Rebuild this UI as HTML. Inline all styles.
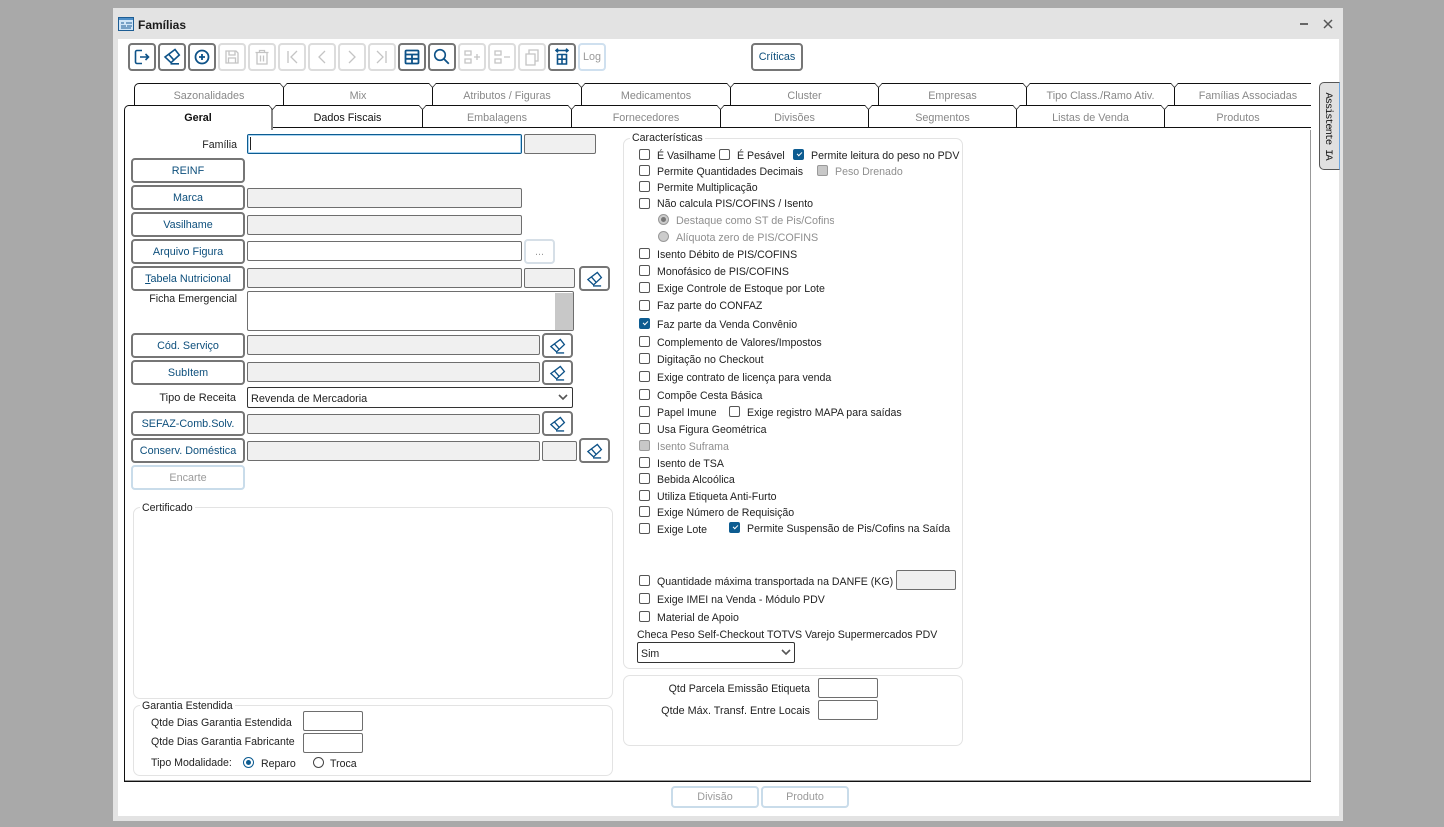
<!DOCTYPE html>
<html><head><meta charset="utf-8"><title>Famílias</title>
<style>
html,body{margin:0;padding:0;width:1444px;height:827px;overflow:hidden;background:#a9a9a9;font:10.6px "Liberation Sans",sans-serif;color:#222}
div,span,svg{position:absolute;box-sizing:border-box}
#win{left:113px;top:8px;width:1230px;height:813px;background:#e3e3e3}
#client{left:118px;top:39px;width:1221px;height:777px;background:#fff}
.l{white-space:nowrap;line-height:14px;height:14px;font-size:10.6px;margin-top:1px}
.r{text-align:right}
.dis{color:#8f8f8f}
.b{border:2px solid #767676;border-radius:4px;background:#fff;text-align:center;color:#0d4f7c;font-size:10.8px;line-height:23px;white-space:nowrap}
.bd{border:2px solid #d6dfe7;border-radius:4px;background:#fff;text-align:center;color:#9a9a9a;font-size:10.8px;line-height:23px;white-space:nowrap}
.t{width:28px;height:28px;top:43px;border:2px solid #767676;border-radius:4px;background:#fff}
.td{width:28px;height:28px;top:43px;border:2px solid #dcdcdc;border-radius:4px;background:#fff}
.t svg,.td svg{left:3px;top:3px;width:18px;height:18px;fill:none;stroke:#0d5288;stroke-width:1.6}
.td svg{stroke:#c4c4c4;stroke-width:1.3}
.i{border:1px solid #6e6e6e;border-radius:2px;background:#f0f0f0;height:20px}
.w{background:#fff}
.tab{height:23px;background:#fff;border:solid #111;border-width:1px 0 1px 1px;text-align:center;line-height:24px;font-size:10.8px;color:#888;white-space:nowrap}
.fs{border:1px solid #e3e3e3;border-radius:7px;background:#fff}
.lg{background:#fff;padding:0 2px;line-height:13px;height:13px;font-size:10.6px;white-space:nowrap;color:#222;margin-top:1px}
.c{width:11px;height:11px;left:639px;border:1px solid #555;border-radius:2px;background:#fff}
.cd{background:#c8c8c8;border-color:#999}
.ck{background:#0d5c91;border-color:#0d5c91}
.ck:after{content:"";position:absolute;left:3px;top:2px;width:4px;height:2px;border:solid #fff;border-width:0 0 1.2px 1.2px;transform:rotate(-45deg)}
.er{width:31px;height:25px;border:2px solid #767676;border-radius:4px;background:#fff}
.er svg{left:5px;top:3px;width:17px;height:17px;fill:none;stroke:#0d5288;stroke-width:1.4}
.rad{width:11px;height:11px;border-radius:50%;border:1px solid #444;background:#fff}
</style></head>
<body>
<svg width="0" height="0" style="left:0;top:0"><defs><symbol id="er" viewBox="0 0 18 18"><path d="M2 9 12 1.500 16.300 7 8 14.700z"/><path d="M5.500 6 11 12.200M7.500 15.800H16"/></symbol></defs></svg>
<div id="win"></div>
<div id="client"></div>

<!-- title -->
<svg style="left:118px;top:17px" width="16" height="14" viewBox="0 0 16 14"><rect x=".5" y=".5" width="15" height="13" fill="#cfe4f7" stroke="#1d5d94"/><rect x="1" y="1" width="14" height="2" fill="#4d8ec7"/><path d="M3 6h3M8 6h6M3 9h5M9 9h5M3 11h10" stroke="#1d5d94" fill="none"/></svg>
<div class="l" style="left:138px;top:17px;font-weight:bold;font-size:12px;color:#1a1a1a">Famílias</div>
<div style="left:1300px;top:23px;width:8px;height:2px;background:#666"></div>
<svg style="left:1323px;top:19px" width="10" height="10" viewBox="0 0 10 10"><path d="M1 1l8 8M9 1l-8 8" stroke="#555" stroke-width="1.500" fill="none"/></svg>

<!-- toolbar -->
<div class="t" style="left:128px"><svg viewBox="0 0 18 18"><path d="M9 2.500H4A1.500 1.500 0 0 0 2.500 4v10A1.500 1.500 0 0 0 4 15.500h5M7 9h8.500M12.500 6l3 3-3 3"/></svg></div>
<div class="t" style="left:158px"><svg viewBox="0 0 18 18"><use href="#er"/></svg></div>
<div class="t" style="left:188px"><svg viewBox="0 0 18 18"><circle cx="9" cy="9" r="6.500" stroke-width="1.800"/><path d="M9 6v6M6 9h6" stroke-width="1.800"/></svg></div>
<div class="td" style="left:218px"><svg viewBox="0 0 18 18"><path d="M3 3h10l2 2v10H3zM6 3v4h6V3M5.500 15v-5h7v5"/></svg></div>
<div class="td" style="left:248px"><svg viewBox="0 0 18 18"><path d="M2.500 4.500h13M6.500 4.500V2.500h5v2M4 4.500V16h10V4.500M7.500 7.500v6M10.500 7.500v6"/></svg></div>
<div class="td" style="left:278px"><svg viewBox="0 0 18 18"><path d="M5 3v12M14 3 8 9l6 6"/></svg></div>
<div class="td" style="left:308px"><svg viewBox="0 0 18 18"><path d="M12 3 6 9l6 6"/></svg></div>
<div class="td" style="left:338px"><svg viewBox="0 0 18 18"><path d="m6 3 6 6-6 6"/></svg></div>
<div class="td" style="left:368px"><svg viewBox="0 0 18 18"><path d="M13 3v12M4 3l6 6-6 6"/></svg></div>
<div class="t" style="left:398px"><svg viewBox="0 0 18 18"><path d="M3.500 2.500h11a1 1 0 0 1 1 1v11a1 1 0 0 1-1 1h-11a1 1 0 0 1-1-1v-11a1 1 0 0 1 1-1zM2.500 6.500h13M2.500 10.800h13M9 6.500v9" stroke-width="1.800"/></svg></div>
<div class="t" style="left:428px"><svg viewBox="0 0 18 18"><circle cx="7" cy="7" r="5.300"/><path d="m11 11 4.800 4.800" stroke-width="1.800"/></svg></div>
<div class="td" style="left:458px"><svg viewBox="0 0 18 18"><path d="M2 3h6v4H2zM2 11h6v4H2zM11 9h6M14 6v6"/></svg></div>
<div class="td" style="left:488px"><svg viewBox="0 0 18 18"><path d="M2 3h6v4H2zM2 11h6v4H2zM11 9h6"/></svg></div>
<div class="td" style="left:518px"><svg viewBox="0 0 18 18"><path d="M3 6h9v11H3zM6 6V2h9v11h-3"/></svg></div>
<div class="t" style="left:548px"><svg viewBox="0 0 18 18"><path d="M3 2.500h12M5 .7 3 2.500 5 4.300M13 .7l2 1.800L13 4.300M4.500 6.500h9v9.500h-9zM4.500 11.200h9M9 6.500V16"/></svg></div>
<div class="bd" style="left:578px;top:43px;width:28px;height:28px;line-height:25px;border-color:#cfe0ef">Log</div>
<div class="b" style="left:751px;top:43px;width:52px;height:28px;line-height:25px">Críticas</div>

<!-- tabs row 1 -->
<div class="tab" style="left:134px;top:83px;width:149px;border-top-left-radius:5px">Sazonalidades</div>
<div class="tab" style="left:283px;top:83px;width:149px">Mix</div>
<div class="tab" style="left:432px;top:83px;width:149px">Atributos / Figuras</div>
<div class="tab" style="left:581px;top:83px;width:149px">Medicamentos</div>
<div class="tab" style="left:730px;top:83px;width:148px">Cluster</div>
<div class="tab" style="left:878px;top:83px;width:148px">Empresas</div>
<div class="tab" style="left:1026px;top:83px;width:148px">Tipo Class./Ramo Ativ.</div>
<div class="tab" style="left:1174px;top:83px;width:137px;padding-left:10px;padding-right:0">Famílias Associadas</div>

<!-- panel -->
<div style="left:124px;top:127px;width:1187px;height:655px;border-left:1px solid #111;border-bottom:1px solid #111;background:#fff"></div>
<div style="left:125px;top:780px;width:1186px;height:1px;background:#999"></div>
<div style="left:1310px;top:130px;width:1px;height:650px;background:#999"></div>

<!-- tabs row 2 -->
<div class="tab" style="left:272px;top:105px;width:150px;color:#111">Dados Fiscais</div>
<div class="tab" style="left:422px;top:105px;width:149px">Embalagens</div>
<div class="tab" style="left:571px;top:105px;width:149px">Fornecedores</div>
<div class="tab" style="left:720px;top:105px;width:148px">Divisões</div>
<div class="tab" style="left:868px;top:105px;width:148px">Segmentos</div>
<div class="tab" style="left:1016px;top:105px;width:148px">Listas de Venda</div>
<div class="tab" style="left:1164px;top:105px;width:147px">Produtos</div>
<div class="tab" style="left:124px;top:105px;width:149px;height:25px;border-width:1px 2px 0 1px;border-color:#111 #888 #fff #111;border-top-left-radius:5px;color:#111;font-weight:bold">Geral</div>
<!-- tab notches -->
<svg style="left:0;top:0" width="1444" height="130" viewBox="0 0 1444 130"><path d="M280 83h7l-3.500 4zM429 83h7l-3.500 4zM578 83h7l-3.500 4zM727 83h7l-3.500 4zM875 83h7l-3.500 4zM1023 83h7l-3.500 4zM1171 83h7l-3.500 4zM269 105h7l-3.500 4zM419 105h7l-3.500 4zM568 105h7l-3.500 4zM717 105h7l-3.500 4zM865 105h7l-3.500 4zM1013 105h7l-3.500 4zM1161 105h7l-3.500 4z" fill="#fff"/><path d="M280 83.500l3.500 4 3.500-4M429 83.500l3.500 4 3.500-4M578 83.500l3.500 4 3.500-4M727 83.500l3.500 4 3.500-4M875 83.500l3.500 4 3.500-4M1023 83.500l3.500 4 3.500-4M1171 83.500l3.500 4 3.500-4M269 105.500l3.500 4 3.500-4M419 105.500l3.500 4 3.500-4M568 105.500l3.500 4 3.500-4M717 105.500l3.500 4 3.500-4M865 105.500l3.500 4 3.500-4M1013 105.500l3.500 4 3.500-4M1161 105.500l3.500 4 3.500-4" fill="none" stroke="#333" stroke-width=".8"/></svg>

<!-- assistant -->
<div style="left:1319px;top:82px;width:21px;height:88px;background:#e0e0e0;border:1px solid #555;border-right:1px solid #6ea7e0;border-radius:5px 0 0 5px"></div>
<div class="l" style="left:1286px;top:119px;width:84px;text-align:center;transform:rotate(90deg);font-family:'Liberation Mono',monospace;font-size:10.500px;color:#111;letter-spacing:-1.150px;margin-top:0">Assistente IA</div>

<!-- left column -->
<div class="l r" style="left:140px;top:137px;width:97px">Família</div>
<div class="i w" style="left:247px;top:134px;width:275px;border:1px solid #0d5c91;box-shadow:inset 0 0 0 1px #a8d4f2"></div>
<div style="left:250px;top:137px;width:1px;height:13px;background:#222"></div>
<div class="i" style="left:524px;top:134px;width:72px"></div>

<div class="b" style="left:131px;top:158px;width:114px;height:25px">REINF</div>
<div class="b" style="left:131px;top:185px;width:114px;height:25px">Marca</div>
<div class="i" style="left:247px;top:188px;width:275px"></div>
<div class="b" style="left:131px;top:212px;width:114px;height:25px">Vasilhame</div>
<div class="i" style="left:247px;top:215px;width:275px"></div>
<div class="b" style="left:131px;top:239px;width:114px;height:25px">Arquivo Figura</div>
<div class="i w" style="left:247px;top:241px;width:275px"></div>
<div class="bd" style="left:524px;top:239px;width:31px;height:25px">...</div>
<div class="b" style="left:131px;top:266px;width:114px;height:25px"><u>T</u>abela Nutricional</div>
<div class="i" style="left:247px;top:268px;width:275px"></div>
<div class="i" style="left:524px;top:268px;width:51px"></div>
<div class="er" style="left:579px;top:266px"><svg viewBox="0 0 18 18"><use href="#er"/></svg></div>
<div class="l r" style="left:130px;top:291px;width:107px">Ficha Emergencial</div>
<div class="i w" style="left:247px;top:291px;width:327px;height:40px"></div>
<div style="left:555px;top:293px;width:18px;height:37px;background:#c8c8c8"></div>

<div class="b" style="left:131px;top:333px;width:114px;height:25px">Cód. Serviço</div>
<div class="i" style="left:247px;top:335px;width:293px"></div>
<div class="er" style="left:542px;top:333px"><svg viewBox="0 0 18 18"><use href="#er"/></svg></div>
<div class="b" style="left:131px;top:360px;width:114px;height:25px">SubItem</div>
<div class="i" style="left:247px;top:362px;width:293px"></div>
<div class="er" style="left:542px;top:360px"><svg viewBox="0 0 18 18"><use href="#er"/></svg></div>
<div class="l r" style="left:130px;top:390px;width:106px;font-size:11px">Tipo de Receita</div>
<div class="i w" style="left:247px;top:387px;width:326px;height:21px;border-color:#333"></div>
<div class="l" style="left:251px;top:391px;font-size:10.900px">Revenda de Mercadoria</div>
<svg style="left:558px;top:394px" width="10" height="7" viewBox="0 0 10 7"><path d="m1 1 4 4 4-4" fill="none" stroke="#555" stroke-width="1.600"/></svg>
<div class="b" style="left:131px;top:411px;width:114px;height:25px">SEFAZ-Comb.Solv.</div>
<div class="i" style="left:247px;top:414px;width:293px"></div>
<div class="er" style="left:542px;top:411px"><svg viewBox="0 0 18 18"><use href="#er"/></svg></div>
<div class="b" style="left:131px;top:438px;width:114px;height:25px">Conserv. Doméstica</div>
<div class="i" style="left:247px;top:441px;width:293px"></div>
<div class="i" style="left:542px;top:441px;width:35px"></div>
<div class="er" style="left:579px;top:438px"><svg viewBox="0 0 18 18"><use href="#er"/></svg></div>
<div class="bd" style="left:131px;top:465px;width:114px;height:25px;border-color:#c9dcea">Encarte</div>

<!-- fieldsets -->
<div class="fs" style="left:133px;top:507px;width:480px;height:192px"></div>
<div class="lg" style="left:140px;top:501px">Certificado</div>
<div class="fs" style="left:133px;top:705px;width:480px;height:71px"></div>
<div class="lg" style="left:140px;top:699px">Garantia Estendida</div>
<div class="l" style="left:151px;top:715px">Qtde Dias Garantia Estendida</div>
<div class="i w" style="left:303px;top:711px;width:60px"></div>
<div class="l" style="left:151px;top:734px">Qtde Dias Garantia Fabricante</div>
<div class="i w" style="left:303px;top:733px;width:60px"></div>
<div class="l" style="left:151px;top:755px">Tipo Modalidade:</div>
<div class="rad" style="left:243px;top:757px;border-color:#0d5c91"></div>
<div style="left:246px;top:760px;width:5px;height:5px;border-radius:50%;background:#0d5c91"></div>
<div class="l" style="left:261px;top:756px">Reparo</div>
<div class="rad" style="left:313px;top:757px"></div>
<div class="l" style="left:330px;top:756px">Troca</div>

<!-- características -->
<div class="fs" style="left:623px;top:138px;width:340px;height:531px"></div>
<div class="lg" style="left:630px;top:131px">Características</div>

<div class="c" style="top:149px"></div><div class="l" style="left:657px;top:148px">É Vasilhame</div>
<div class="c" style="top:149px;left:719px"></div><div class="l" style="left:737px;top:148px">É Pesável</div>
<div class="c ck" style="top:149px;left:793px"></div><div class="l" style="left:811px;top:148px">Permite leitura do peso no PDV</div>
<div class="c" style="top:165px"></div><div class="l" style="left:657px;top:164px">Permite Quantidades Decimais</div>
<div class="c cd" style="top:165px;left:817px"></div><div class="l dis" style="left:835px;top:164px">Peso Drenado</div>
<div class="c" style="top:181px"></div><div class="l" style="left:657px;top:180px">Permite Multiplicação</div>
<div class="c" style="top:198px"></div><div class="l" style="left:657px;top:196px">Não calcula PIS/COFINS / Isento</div>
<div class="rad" style="left:658px;top:214px;background:#ccc;border-color:#999"></div><div style="left:661px;top:217px;width:5px;height:5px;border-radius:50%;background:#777"></div>
<div style="left:676px;top:213px;width:158px;height:16px;overflow:hidden"><div class="l dis" style="left:0;top:0;font-size:10.800px">Destaque como ST de Pis/Cofins</div></div>
<div class="rad" style="left:658px;top:231px;background:#ccc;border-color:#999"></div><div class="l dis" style="left:676px;top:230px;font-size:10.750px">Alíquota zero de PIS/COFINS</div>
<div class="c" style="top:248px"></div><div class="l" style="left:657px;top:247px">Isento Débito de PIS/COFINS</div>
<div class="c" style="top:265px"></div><div class="l" style="left:657px;top:264px">Monofásico de PIS/COFINS</div>
<div class="c" style="top:282px"></div><div class="l" style="left:657px;top:281px">Exige Controle de Estoque por Lote</div>
<div class="c" style="top:300px"></div><div class="l" style="left:657px;top:298px">Faz parte do CONFAZ</div>
<div class="c ck" style="top:318px"></div><div class="l" style="left:657px;top:317px">Faz parte da Venda Convênio</div>
<div class="c" style="top:336px"></div><div class="l" style="left:657px;top:335px">Complemento de Valores/Impostos</div>
<div class="c" style="top:353px"></div><div class="l" style="left:657px;top:352px">Digitação no Checkout</div>
<div class="c" style="top:371px"></div><div class="l" style="left:657px;top:370px">Exige contrato de licença para venda</div>
<div class="c" style="top:389px"></div><div class="l" style="left:657px;top:388px">Compõe Cesta Básica</div>
<div class="c" style="top:406px"></div><div class="l" style="left:657px;top:405px">Papel Imune</div>
<div class="c" style="top:406px;left:729px"></div><div class="l" style="left:747px;top:405px">Exige registro MAPA para saídas</div>
<div class="c" style="top:423px"></div><div class="l" style="left:657px;top:422px">Usa Figura Geométrica</div>
<div class="c cd" style="top:440px"></div><div class="l dis" style="left:657px;top:439px">Isento Suframa</div>
<div class="c" style="top:457px"></div><div class="l" style="left:657px;top:456px">Isento de TSA</div>
<div class="c" style="top:473px"></div><div class="l" style="left:657px;top:472px">Bebida Alcoólica</div>
<div class="c" style="top:490px"></div><div class="l" style="left:657px;top:489px">Utiliza Etiqueta Anti-Furto</div>
<div class="c" style="top:506px"></div><div style="left:657px;top:505px;width:137px;height:16px;overflow:hidden"><div class="l" style="left:0;top:0">Exige Número de Requisição</div></div>
<div class="c" style="top:523px"></div><div class="l" style="left:657px;top:522px">Exige Lote</div>
<div class="c ck" style="top:522px;left:729px"></div><div class="l" style="left:747px;top:521px">Permite Suspensão de Pis/Cofins na Saída</div>
<div class="c" style="top:575px"></div><div class="l" style="left:657px;top:574px">Quantidade máxima transportada na DANFE (KG)</div>
<div class="i" style="left:896px;top:570px;width:60px"></div>
<div class="c" style="top:593px"></div><div class="l" style="left:657px;top:592px">Exige IMEI na Venda - Módulo PDV</div>
<div class="c" style="top:611px"></div><div class="l" style="left:657px;top:610px">Material de Apoio</div>
<div class="l" style="left:637px;top:627px">Checa Peso Self-Checkout TOTVS Varejo Supermercados PDV</div>
<div class="i w" style="left:637px;top:642px;width:158px;height:21px;border-color:#333"></div>
<div class="l" style="left:641px;top:646px">Sim</div>
<svg style="left:781px;top:649px" width="10" height="7" viewBox="0 0 10 7"><path d="m1 1 4 4 4-4" fill="none" stroke="#555" stroke-width="1.600"/></svg>

<div class="fs" style="left:623px;top:675px;width:340px;height:71px"></div>
<div class="l r" style="left:640px;top:681px;width:170px">Qtd Parcela Emissão Etiqueta</div>
<div class="i w" style="left:818px;top:678px;width:60px"></div>
<div class="l r" style="left:640px;top:703px;width:170px;font-size:10.800px">Qtde Máx. Transf. Entre Locais</div>
<div class="i w" style="left:818px;top:700px;width:60px"></div>

<!-- bottom -->
<div class="bd" style="left:671px;top:786px;width:88px;height:22px;line-height:19px;border-color:#c9dcea">Divisão</div>
<div class="bd" style="left:761px;top:786px;width:88px;height:22px;line-height:19px;border-color:#c9dcea">Produto</div>
</body></html>
